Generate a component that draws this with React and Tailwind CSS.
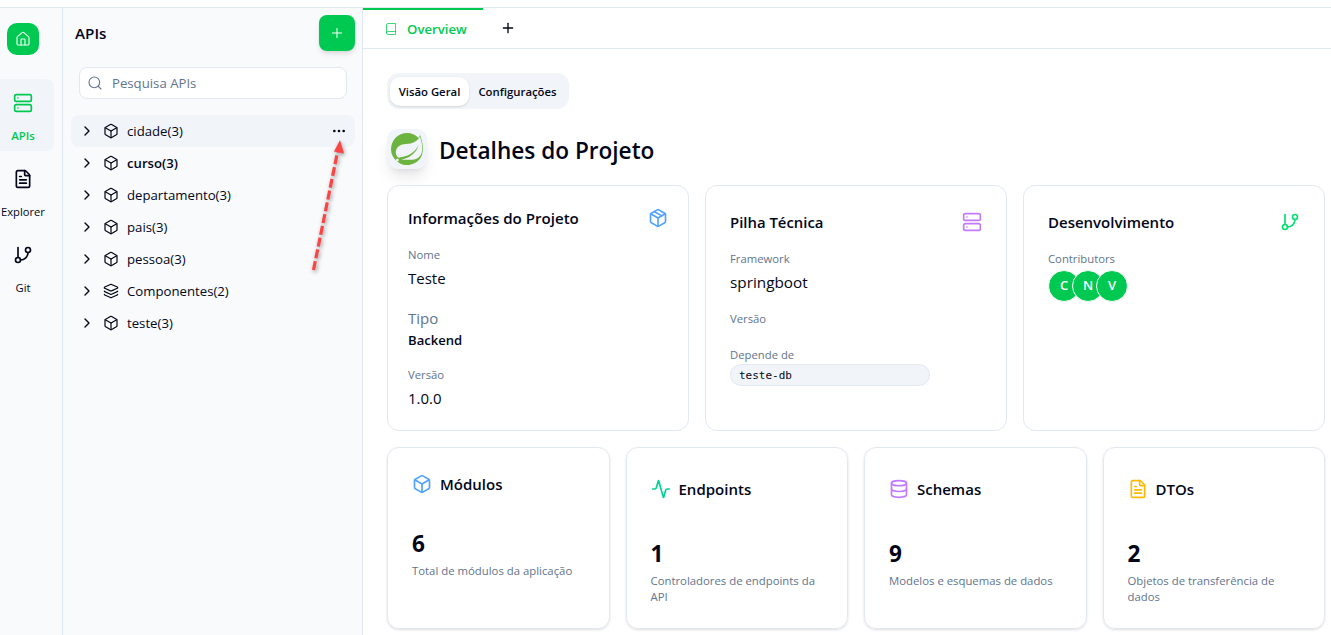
import {
  House, Server, FileText, GitBranch, Plus, Search, ChevronRight, Box, Layers,
  Ellipsis, Package, Activity, Database,
} from "lucide-react";
import { SiSpring } from "react-icons/si";

const modules = [
  { name: "cidade(3)", active: true },
  { name: "curso(3)", bold: true },
  { name: "departamento(3)" },
  { name: "pais(3)" },
  { name: "pessoa(3)" },
  { name: "Componentes(2)", icon: Layers },
  { name: "teste(3)" },
];

const stats = [
  { title: "Módulos", value: "6", text: "Total de módulos da aplicação", icon: Box, color: "text-[#51a2ff]", pad: "pt-[24px]", gap: "mt-[32px]" },
  { title: "Endpoints", value: "1", text: "Controladores de endpoints da API", icon: Activity, color: "text-[#00d492]", pad: "pt-[29px]", gap: "mt-[37px]" },
  { title: "Schemas", value: "9", text: "Modelos e esquemas de dados", icon: Database, color: "text-[#c27aff]", pad: "pt-[29px]", gap: "mt-[37px]" },
  { title: "DTOs", value: "2", text: "Objetos de transferência de dados", icon: FileText, color: "text-[#ffb900]", pad: "pt-[29px]", gap: "mt-[37px]" },
];

function Rail() {
  return (
    <nav className="flex w-[63px] shrink-0 flex-col border-r border-slate-200 bg-slate-50">
      <div className="ml-[7px] mt-[15px] flex size-8 items-center justify-center rounded-[10px] bg-[#00c951] text-white">
        <House size={16} strokeWidth={1.8} className="opacity-90" />
      </div>
      <div className="mt-6 flex h-[72px] w-[54px] flex-col items-center rounded-r-lg bg-slate-100 pr-[8px] pt-[14px] text-[#00c951]">
        <Server size={20} />
        <span className="mt-[15px] text-[11.4px] font-semibold leading-4">APIs</span>
      </div>
      <div className="mt-[4px] flex h-[72px] w-[46px] flex-col items-center pt-[14px]">
        <FileText size={20} />
        <span className="mt-[15px] text-[11.2px] leading-4">Explorer</span>
      </div>
      <div className="mt-[4px] flex h-[72px] w-[46px] flex-col items-center pt-[14px]">
        <GitBranch size={20} />
        <span className="mt-[15px] text-[11.2px] leading-4">Git</span>
      </div>
    </nav>
  );
}

function Explorer() {
  return (
    <aside className="relative flex w-[300px] shrink-0 flex-col border-r border-slate-200 bg-slate-50">
      <header className="flex items-start justify-between pl-3 pr-[7px] pt-[7px]">
        <h2 className="pt-[6px] text-[15.2px] font-semibold leading-6">APIs</h2>
        <button className="flex size-9 items-center justify-center rounded-lg bg-[#00c951] text-white shadow-md">
          <Plus size={16} strokeWidth={1.5} />
        </button>
      </header>
      <div className="ml-4 mt-4 flex h-8 w-[268px] items-center gap-[9px] rounded-lg border border-slate-200 bg-white pl-[7px] text-[13.2px] text-slate-500">
        <Search size={16} strokeWidth={1.6} />
        <span className="pt-0.5">Pesquisa APIs</span>
      </div>
      <ul className="ml-2 mr-[7px] mt-4">
        {modules.map(({ name, active, bold, icon: Icon = Box }) => (
          <li key={name} className={active ? "flex h-8 items-center rounded-lg bg-slate-100 pl-2 pr-2" : "flex h-8 items-center pl-2 pr-2"}>
            <ChevronRight size={16} />
            <Icon size={16} strokeWidth={1.8} className="ml-2" />
            <span className={bold ? "ml-2 pt-0.5 text-[13.2px] font-semibold" : "ml-2 pt-0.5 text-[13.2px]"}>{name}</span>
            {active && <Ellipsis size={16} className="ml-auto" />}
          </li>
        ))}
      </ul>
      <svg className="absolute left-[238px] top-[124px]" width="60" height="150" viewBox="0 0 60 150" style={{ filter: "drop-shadow(1px 2px 2px rgba(0,0,0,.4))" }}>
        <path d="M12.500 138 L36.500 20" stroke="#fb4444" strokeWidth="3.2" strokeDasharray="9 3" />
        <path d="M39 8 L43 21.500 L33 19.500 Z" fill="#fb4444" />
      </svg>
    </aside>
  );
}

function InfoCards() {
  return (
    <div className="mt-4 grid grid-cols-3 gap-4">
      <section className="h-[246px] rounded-xl border border-slate-200 px-5 pt-5">
        <div className="flex h-6 items-center justify-between">
          <h3 className="text-[15.1px] font-semibold">Informações do Projeto</h3>
          <Package size={20} className="text-[#51a2ff]" />
        </div>
        <p className="mt-[17px] text-[11.3px] leading-4 text-slate-500">Nome</p>
        <p className="mt-[3px] text-[15px] leading-6">Teste</p>
        <p className="mt-4 text-[15px] leading-6 text-slate-500">Tipo</p>
        <p className="text-[13.1px] font-semibold leading-5">Backend</p>
        <p className="mt-[17px] text-[11.3px] leading-4 text-slate-500">Versão</p>
        <p className="mt-[3px] text-[15px] leading-6">1.0.0</p>
      </section>
      <section className="h-[246px] rounded-xl border border-slate-200 px-6 pt-6">
        <div className="flex h-6 items-center justify-between">
          <h3 className="text-[14.9px] font-semibold">Pilha Técnica</h3>
          <Server size={20} className="text-[#c27aff]" />
        </div>
        <p className="mt-[17px] text-[11.3px] leading-4 text-slate-500">Framework</p>
        <p className="mt-[3px] text-[15.3px] leading-6">springboot</p>
        <p className="mt-[17px] text-[11.3px] leading-4 text-slate-500">Versão</p>
        <p className="mt-5 text-[11.3px] leading-4 text-slate-500">Depende de</p>
        <p className="mt-[1px] h-[22px] w-[200px] rounded-full border border-slate-200 bg-slate-100 pl-2 pt-px font-['DejaVu_Sans_Mono',monospace] text-[11px] leading-5">teste-db</p>
      </section>
      <section className="h-[246px] rounded-xl border border-slate-200 px-6 pt-6">
        <div className="flex h-6 items-center justify-between">
          <h3 className="text-[15px] font-semibold">Desenvolvimento</h3>
          <GitBranch size={20} className="text-[#05df72]" />
        </div>
        <p className="mt-[17px] text-[11.3px] leading-4 text-slate-500">Contributors</p>
        <div className="mt-[3px] flex -space-x-2">
          {["C", "N", "V"].map((letter) => (
            <span key={letter} className="flex size-8 items-center justify-center rounded-full border border-white bg-[#00c951] text-[13px] font-semibold text-white">{letter}</span>
          ))}
        </div>
      </section>
    </div>
  );
}

function StatCards() {
  return (
    <div className="mt-4 grid grid-cols-4 gap-4">
      {stats.map(({ title, value, text, icon: Icon, color, pad, gap }) => (
        <section key={title} className={`h-[182px] rounded-xl border border-slate-200 px-6 shadow-sm ${pad}`}>
          <div className="flex h-6 items-center gap-2">
            <Icon size={20} className={color} />
            <h3 className="text-[15px] font-semibold">{title}</h3>
          </div>
          <p className={`text-[22.6px] font-bold leading-8 ${gap}`}>{value}</p>
          <p className="mt-[3px] text-[11.35px] leading-4 text-slate-500">{text}</p>
        </section>
      ))}
    </div>
  );
}

export default function App() {
  return (
    <div className="flex h-[635px] w-[1331px] flex-col overflow-hidden bg-white font-['Open_Sans',sans-serif] text-[#020618]">
      <div className="h-2 shrink-0 border-b border-slate-200" />
      <div className="flex min-h-0 flex-1">
        <Rail />
        <Explorer />
        <main className="min-w-0 flex-1">
          <div className="flex h-[41px] border-b border-slate-200">
            <div className="flex w-[120px] items-center border-t-2 border-[#00c951] pl-[22px] text-[#00c951]">
              <svg width="12" height="12" viewBox="0 0 12 12" fill="none" stroke="currentColor" strokeOpacity="0.75">
                <path d="M3 .5h7.500v11H3A1.500 1.500 0 0 1 1.500 10V2A1.500 1.500 0 0 1 3 .5ZM1.500 10a1.500 1.500 0 0 1 1.500-1.500h7.500" />
              </svg>
              <span className="ml-[10px] pt-0.5 text-[13.2px] font-semibold">Overview</span>
            </div>
            <Plus size={16} className="ml-[17px] mt-3" />
          </div>
          <div className="pl-6 pr-[6px] pt-6">
            <div className="flex h-9 w-[182px] rounded-xl bg-slate-100 p-[3px] pt-1 text-[11.35px] font-semibold">
              <span className="flex w-[79px] items-center justify-center rounded-[10px] bg-white pt-px shadow-sm">Visão Geral</span>
              <span className="flex flex-1 items-center justify-center pt-px">Configurações</span>
            </div>
            <div className="mt-[20px] flex h-10 items-center gap-3">
              <span className="flex size-10 items-center justify-center rounded-[10px] bg-slate-100 shadow-lg">
                <SiSpring size={32} color="#6db33f" />
              </span>
              <h1 className="pt-[3px] text-[22.6px] font-semibold leading-8">Detalhes do Projeto</h1>
            </div>
            <InfoCards />
            <StatCards />
          </div>
        </main>
      </div>
    </div>
  );
}
